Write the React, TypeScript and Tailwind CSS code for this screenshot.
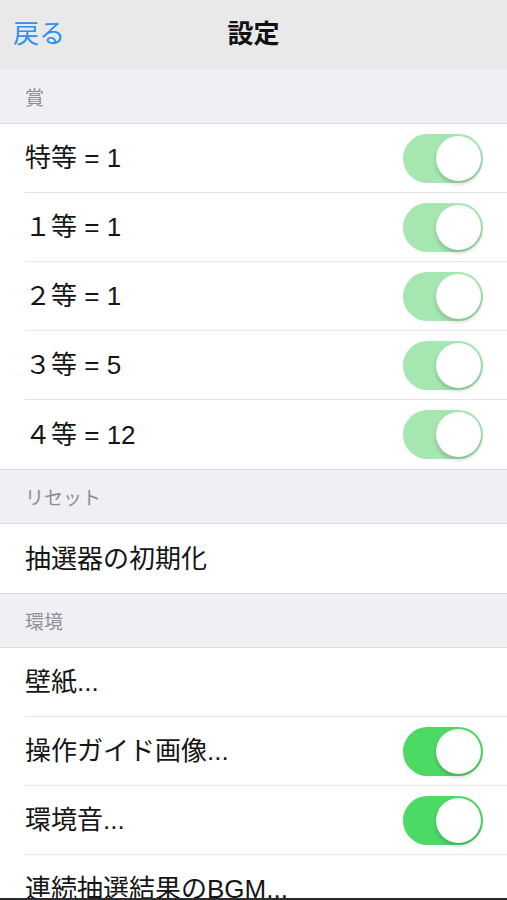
import React from "react";

const FONT = { fontFamily: '"Liberation Sans", "Noto Sans CJK JP", sans-serif' };

function Toggle({ pale }: { pale?: boolean }) {
  return (
    <div
      className={`relative flex items-center justify-end w-[80px] h-[49px] rounded-full pr-[2px] ${
        pale ? "bg-[#a5e6b1]" : "bg-[#4cd964]"
      }`}
    >
      <div className="w-[45px] h-[45px] rounded-full bg-white shadow-[0_3px_4px_rgba(0,0,0,0.18)]" />
    </div>
  );
}

function Header({ label }: { label: string }) {
  return (
    <div className="h-[54px] shrink-0 flex items-center pt-[6px] pl-[25px] bg-[#efeff4] border-b border-[#d9d9dd] text-[19px] text-[#8e8e93]">
      {label}
    </div>
  );
}

function Row({
  label,
  toggle,
  last,
}: {
  label: string;
  toggle?: "pale" | "on";
  last?: boolean;
}) {
  return (
    <div className="h-[69px] shrink-0 flex pl-[25px] bg-white">
      <div
        className={`flex-1 flex items-center justify-between pr-[24px] ${
          last ? "" : "border-b border-[#e5e5e8]"
        }`}
      >
        <span className="text-[26px] text-[#151515] leading-none">{label}</span>
        {toggle && <Toggle pale={toggle === "pale"} />}
      </div>
    </div>
  );
}

export default function App() {
  return (
    <div
      className="w-[507px] h-[900px] overflow-hidden bg-[#efeff4] border-b-2 border-[#2b2b2b] flex flex-col"
      style={FONT}
    >
      <div className="h-[70px] shrink-0 bg-[#e9e9ea] flex items-center justify-between px-[13px] pb-[2px]">
        <span className="text-[26px] text-[#2e8ff0] w-[80px]">戻る</span>
        <span className="text-[26px] font-bold text-[#111]">設定</span>
        <span className="w-[80px]" />
      </div>

      <Header label="賞" />
      <div className="shrink-0 border-b border-[#d9d9dd]">
        <Row label="特等 = 1" toggle="pale" />
        <Row label="１等 = 1" toggle="pale" />
        <Row label="２等 = 1" toggle="pale" />
        <Row label="３等 = 5" toggle="pale" />
        <Row label="４等 = 12" toggle="pale" last />
      </div>

      <Header label="リセット" />
      <div className="shrink-0 border-b border-[#d9d9dd]">
        <Row label="抽選器の初期化" last />
      </div>

      <Header label="環境" />
      <div className="shrink-0">
        <Row label="壁紙..." />
        <Row label="操作ガイド画像..." toggle="on" />
        <Row label="環境音..." toggle="on" />
        <Row label="連続抽選結果のBGM..." />
      </div>
    </div>
  );
}
